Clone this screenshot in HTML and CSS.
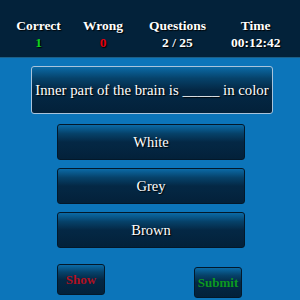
FILE: index.html
```html
<!DOCTYPE html>
<html lang="en">
<head>
    <meta charset="UTF-8">
    <meta name="viewport" content="width=device-width, initial-scale=1.0">
    <title>Quiz</title>
    <link rel="stylesheet" href="styles.css">
</head>
<body>

<header class="stats">
    <div class="stat stat-correct">
        <div class="stat-label">Correct</div>
        <div class="stat-value green">1</div>
    </div>
    <div class="stat stat-wrong">
        <div class="stat-label">Wrong</div>
        <div class="stat-value red">0</div>
    </div>
    <div class="stat stat-questions">
        <div class="stat-label">Questions</div>
        <div class="stat-value">2 / 25</div>
    </div>
    <div class="stat stat-time">
        <div class="stat-label">Time</div>
        <div class="stat-value">00:12:42</div>
    </div>
</header>

<div class="question">Inner part of the brain is _____ in color</div>

<div class="options">
    <button class="option">White</button>
    <button class="option">Grey</button>
    <button class="option">Brown</button>
</div>

<div class="actions">
    <button class="action show">Show</button>
    <button class="action submit">Submit</button>
</div>

</body>
</html>
```

FILE: styles.css
```css
body {
    margin: 0;
    padding: 0;
    background-color: #0c75ba;
    font-family: "Liberation Serif", "Times New Roman", serif;
    color: #fff;
    width: 300px;
    height: 300px;
    overflow: hidden;
}
.stats {
    background-color: #03223a;
    height: 58px;
    border-bottom: 1px solid #1d5f86;
    display: flex;
    padding: 18px 0 0 16px;
    box-sizing: border-box;
}
.stat {
    text-align: center;
    font-weight: bold;
    font-size: 13.5px;
    line-height: 16px;
}
.stat-correct { width: 45px; }
.stat-wrong { width: 40px; margin-left: 22px; }
.stat-questions { width: 57px; margin-left: 26px; }
.stat-time { width: 49px; margin-left: 25px; }
.stat-label {
    text-shadow: 1px 1px 1px #000;
}
.stat-value {
    margin-top: 1px;
    text-shadow: 1px 1px 1px #000;
}
.green { color: #10d020; }
.red { color: #e00010; }

.question,
.option,
.action {
    background: linear-gradient(to bottom, #0b6aa6 0%, #06426a 25%, #042845 50%, #03213a 100%);
    border-radius: 3px;
}
.question {
    width: 240px;
    height: 46px;
    margin: 8px 0 0 31px;
    border: 1px solid #a9c4dc;
    display: flex;
    align-items: center;
    justify-content: center;
    font-size: 14.8px;
    white-space: nowrap;
    text-shadow: 1px 1px 1px #000;
}
.options {
    display: flex;
    flex-direction: column;
    gap: 8px;
    margin: 10px 0 0 57px;
    width: 188px;
}
.option {
    height: 36px;
    border: 1px solid #03182a;
    color: #fff;
    font-family: inherit;
    font-size: 14.5px;
    text-shadow: 1px 1px 1px #000;
    padding: 0;
    cursor: pointer;
}
.actions {
    display: flex;
    align-items: flex-start;
    margin: 16px 0 0 57px;
    width: 185px;
    justify-content: space-between;
}
.action {
    width: 48px;
    height: 31px;
    border: 1px solid #03182a;
    font-family: inherit;
    font-weight: bold;
    font-size: 13px;
    padding: 0;
    cursor: pointer;
}
.show { color: #b01020; }
.submit { color: #0c9a20; margin-top: 3px; }
```
